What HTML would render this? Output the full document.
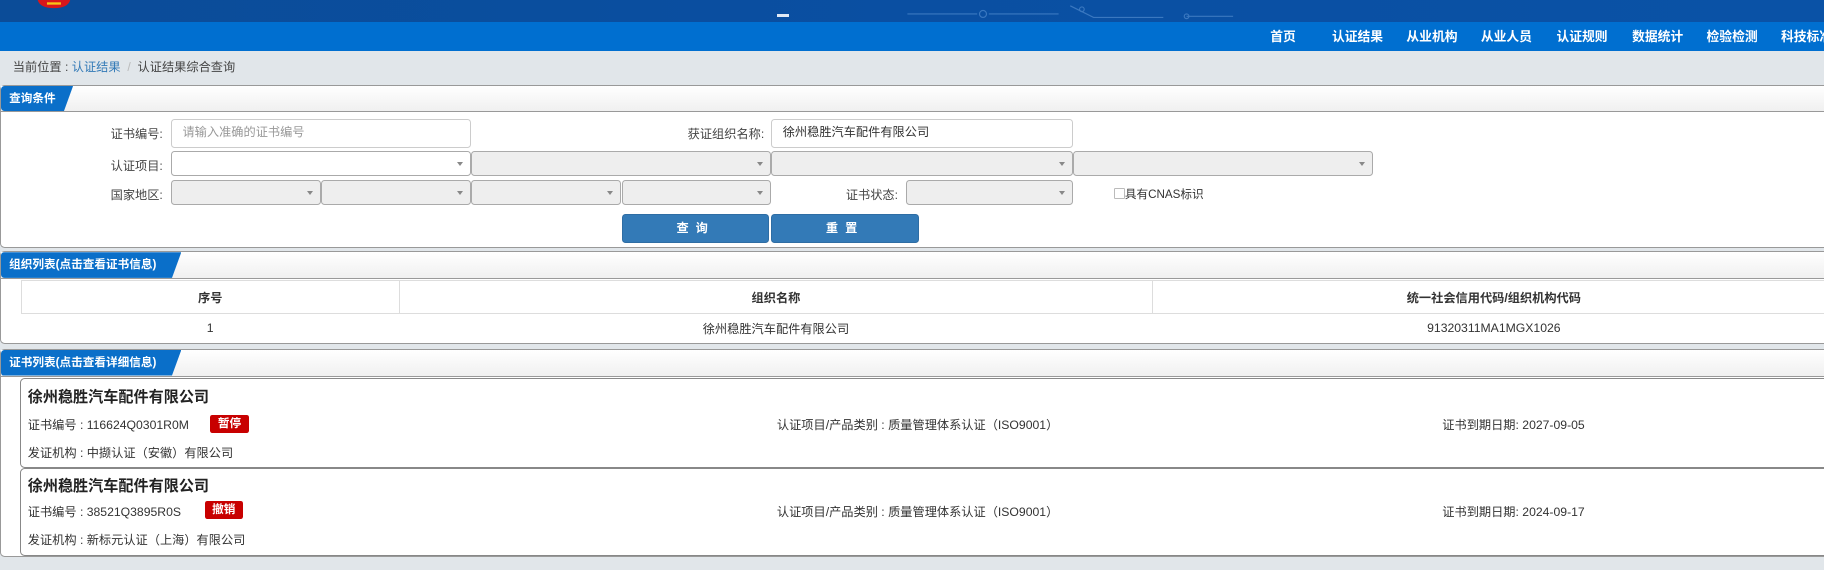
<!DOCTYPE html>
<html><head><meta charset="utf-8"><style>
html{zoom:1.16327}
body{margin:0;width:1568px;height:490px;overflow:hidden;background:#e1e6ea;font-family:"Liberation Sans","Noto Sans CJK SC",sans-serif;font-size:10.5px;color:#333;position:relative}
.abs{position:absolute}
.hdr{left:0;top:0;width:1568px;height:19px;background:linear-gradient(90deg,#0b4c98,#0a4fa2 50%,#0a52a6);}
.nav{left:0;top:19px;width:1568px;height:25px;background:#006fd0}
.nav span{position:absolute;top:3px;color:#fff;font-weight:bold;font-size:11px;white-space:nowrap}
.panel{left:0;width:1580px;background:#fff;border:1px solid #999;border-radius:4px;box-sizing:border-box}
.ph{position:absolute;left:0;top:0;right:0;height:22px;background:linear-gradient(#fff,#f0f0f0);border-bottom:1px solid #999}
.tab{position:absolute;left:0;top:0;height:22px;background:#0a6fc9;color:#fff;font-weight:bold;font-size:10px;line-height:22px;padding-left:7px;clip-path:polygon(0 0,100% 0,calc(100% - 8px) 100%,0 100%);border-radius:3px 0 0 3px;white-space:nowrap}
.lbl{position:absolute;text-align:right;font-size:10.5px;color:#444}
.inp{position:absolute;border:1px solid #ccc;border-radius:3px;background:#fff;box-sizing:border-box;font-size:10.5px;padding-left:9px;line-height:21px}
.sel{position:absolute;border:1px solid #aaa;border-radius:3px;background:#eee;box-sizing:border-box;height:21px}
.sel:after{content:"";position:absolute;right:6px;top:8px;border:3px solid transparent;border-top:4px solid #888}
.btn{position:absolute;top:184px;height:25px;background:#337ab7;border:1px solid #2e6da4;border-radius:3px;box-sizing:border-box;color:#fff;font-weight:bold;text-align:center;line-height:23px;letter-spacing:6px;font-size:10.5px}
table{border-collapse:collapse;font-size:10.5px}
td{border:1px solid #ddd;text-align:center;height:23px}
.card{position:absolute;left:17px;width:1570px;background:#fff;border:1px solid #888;border-radius:4px;box-sizing:border-box}
.card b.t{position:absolute;left:6px;top:5px;font-size:13px;color:#222}
.card span{position:absolute;font-size:10.5px;color:#333;white-space:nowrap}
.bad{position:absolute;background:#c80000;color:#fff;font-weight:bold;border-radius:2px;height:15px;line-height:15px;text-align:center;font-size:10px}
</style></head><body>
<div class="abs hdr">
<svg class="abs" style="left:28px;top:0" width="36" height="8"><path d="M4 0 Q6 7 18 7 Q30 7 32 0Z" fill="#d8161b"/><path d="M12 2h12v2H12z" fill="#f5c518"/></svg>
<div class="abs" style="left:668px;top:12px;width:10px;height:3px;background:#dfe9f6"></div>
<svg class="abs" style="left:600px;top:0" width="500" height="19"><g stroke="#3a78c0" fill="none" stroke-width="1"><path d="M180 12h60M250 12h60M320 5l20 10h60M420 14h40"/><circle cx="245" cy="12" r="3"/><circle cx="330" cy="8" r="2"/><circle cx="420" cy="14" r="2"/></g></svg>
</div>
<div class="abs nav">
<span style="left:1092px">首页</span><span style="left:1145px">认证结果</span><span style="left:1209px">从业机构</span><span style="left:1273px">从业人员</span><span style="left:1338px">认证规则</span><span style="left:1403px">数据统计</span><span style="left:1467px">检验检测</span><span style="left:1531px">科技标准</span>
</div>
<div class="abs" style="left:11px;top:49px;font-size:10.5px;color:#444">当前位置 : <span style="color:#337ab7">认证结果</span> <span style="color:#bbb">&nbsp;/&nbsp;</span> 认证结果综合查询</div>

<div class="abs panel" style="top:73px;height:140px">
<div class="ph"></div><div class="tab" style="width:55px">查询条件</div>
</div>
<div class="lbl" style="left:60px;width:80px;top:107px">证书编号:</div>
<div class="inp" style="left:147px;top:102px;width:258px;height:25px;color:#999">请输入准确的证书编号</div>
<div class="lbl" style="left:560px;width:97px;top:107px">获证组织名称:</div>
<div class="inp" style="left:663px;top:102px;width:259px;height:25px;color:#333">徐州稳胜汽车配件有限公司</div>
<div class="lbl" style="left:60px;width:80px;top:134px">认证项目:</div>
<div class="sel" style="left:147px;top:130px;width:258px;background:#fff"></div>
<div class="sel" style="left:405px;top:130px;width:258px"></div>
<div class="sel" style="left:663px;top:130px;width:259px"></div>
<div class="sel" style="left:922px;top:130px;width:258px"></div>
<div class="lbl" style="left:60px;width:80px;top:159px">国家地区:</div>
<div class="sel" style="left:147px;top:155px;width:129px"></div>
<div class="sel" style="left:276px;top:155px;width:129px"></div>
<div class="sel" style="left:405px;top:155px;width:129px"></div>
<div class="sel" style="left:535px;top:155px;width:128px"></div>
<div class="lbl" style="left:700px;width:72px;top:159px">证书状态:</div>
<div class="sel" style="left:779px;top:155px;width:143px"></div>
<div class="abs" style="left:958px;top:162px;width:7px;height:7px;border:1px solid #bbb;border-radius:1px"></div>
<div class="abs" style="left:967px;top:160px;font-size:10px">具有CNAS标识</div>
<div class="btn" style="left:535px;width:126px">查询</div>
<div class="btn" style="left:663px;width:127px">重置</div>

<div class="abs panel" style="top:216px;height:80px">
<div class="ph"></div><div class="tab" style="width:148px">组织列表(点击查看证书信息)</div>
<table class="abs" style="left:17px;top:24px;width:1560px">
<tr style="font-weight:bold"><td style="width:322px;height:25px">序号</td><td style="width:645px">组织名称</td><td>统一社会信用代码/组织机构代码</td></tr>
<tr><td style="border:none">1</td><td style="border:none">徐州稳胜汽车配件有限公司</td><td style="border:none">91320311MA1MGX1026</td></tr>
</table>
</div>

<div class="abs panel" style="top:300px;height:179px">
<div class="ph"></div><div class="tab" style="width:148px">证书列表(点击查看详细信息)</div>
</div>
<div class="card" style="top:325px;height:77px">
<b class="t">徐州稳胜汽车配件有限公司</b>
<span style="left:6px;top:31px">证书编号 : 116624Q0301R0M</span>
<div class="bad" style="left:163px;top:31px;width:33px">暂停</div>
<span style="left:650px;top:31px">认证项目/产品类别 : 质量管理体系认证（ISO9001）</span>
<span style="left:1222px;top:31px">证书到期日期: 2027-09-05</span>
<span style="left:6px;top:55px">发证机构 : 中撷认证（安徽）有限公司</span>
</div>
<div class="card" style="top:402px;height:76px">
<b class="t">徐州稳胜汽车配件有限公司</b>
<span style="left:6px;top:29px">证书编号 : 38521Q3895R0S</span>
<div class="bad" style="left:158px;top:28px;width:33px">撤销</div>
<span style="left:650px;top:29px">认证项目/产品类别 : 质量管理体系认证（ISO9001）</span>
<span style="left:1222px;top:29px">证书到期日期: 2024-09-17</span>
<span style="left:6px;top:53px">发证机构 : 新标元认证（上海）有限公司</span>
</div>
</body></html>
